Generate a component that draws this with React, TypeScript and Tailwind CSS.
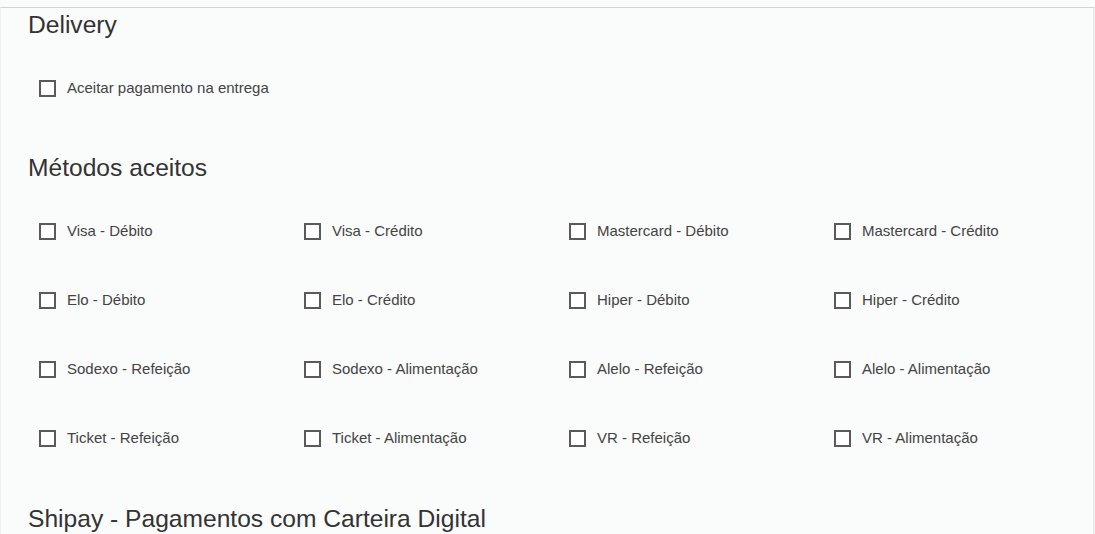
import React from 'react'

const METODOS = [
  'Visa - Débito', 'Visa - Crédito', 'Mastercard - Débito', 'Mastercard - Crédito',
  'Elo - Débito', 'Elo - Crédito', 'Hiper - Débito', 'Hiper - Crédito',
  'Sodexo - Refeição', 'Sodexo - Alimentação', 'Alelo - Refeição', 'Alelo - Alimentação',
  'Ticket - Refeição', 'Ticket - Alimentação', 'VR - Refeição', 'VR - Alimentação',
]

function Check({ label }: { label: string }) {
  return (
    <label className="flex items-center h-5 gap-[11px] cursor-pointer">
      <span className="w-[17px] h-[17px] border-2 border-[#5a5a5a] bg-white shrink-0" />
      <span className="text-[15px] text-[#444]">{label}</span>
    </label>
  )
}

export default function App() {
  return (
    <div className="w-[1095px] h-[534px] overflow-hidden bg-[#fafbfb]" style={{ fontFamily: '"Liberation Sans", Arial, sans-serif' }}>
      <div className="mt-[7px] h-[600px] border-t border-[#d2d2d2] border-r-2 border-r-[#ececec] border-l border-l-[#f0f0f0] w-[1095px] pl-[27px]">
        <h2 className="mt-[4px] text-[24.6px] leading-[26px] text-[#333]">Delivery</h2>
        <div className="mt-[40px] ml-[11px]">
          <Check label="Aceitar pagamento na entrega" />
        </div>

        <h2 className="mt-[57px] text-[24.6px] leading-[26px] text-[#333]">Métodos aceitos</h2>
        <div className="mt-[40px] ml-[11px] grid grid-cols-[265px_265px_265px_265px] gap-y-[49px]">
          {METODOS.map(m => <Check key={m} label={m} />)}
        </div>

        <h2 className="mt-[58px] text-[24.6px] leading-[26px] text-[#333]">Shipay - Pagamentos com Carteira Digital</h2>
      </div>
    </div>
  )
}
